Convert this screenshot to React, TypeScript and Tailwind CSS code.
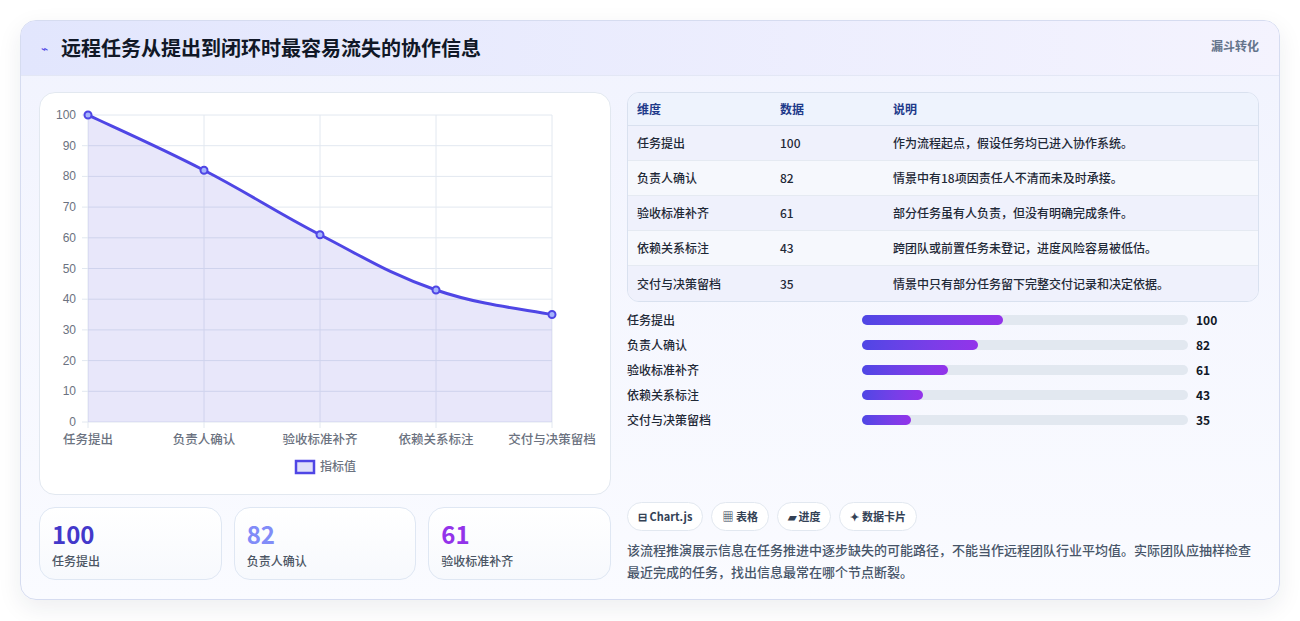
import React from "react";

const rows = [
  ["任务提出", 100, "作为流程起点，假设任务均已进入协作系统。"],
  ["负责人确认", 82, "情景中有18项因责任人不清而未及时承接。"],
  ["验收标准补齐", 61, "部分任务虽有人负责，但没有明确完成条件。"],
  ["依赖关系标注", 43, "跨团队或前置任务未登记，进度风险容易被低估。"],
  ["交付与决策留档", 35, "情景中只有部分任务留下完整交付记录和决定依据。"],
] as const;

const font = { fontFamily: '"Noto Sans CJK SC", "Noto Sans", sans-serif' };

function Chart() {
  const x0 = 48, x1 = 512, y0 = 22, y1 = 329;
  const px = (i: number) => x0 + (i * (x1 - x0)) / 4;
  const py = (v: number) => y1 - (v / 100) * (y1 - y0);
  const pts = rows.map((r, i) => [px(i), py(r[1])] as [number, number]);
  let d = `M${pts[0][0]},${pts[0][1]}`;
  for (let i = 0; i < pts.length - 1; i++) {
    const p0 = pts[Math.max(i - 1, 0)], p1 = pts[i], p2 = pts[i + 1], p3 = pts[Math.min(i + 2, pts.length - 1)];
    const t = 0.2;
    const c1x = p1[0] + (p2[0] - p0[0]) * t, c1y = p1[1] + (p2[1] - p0[1]) * t;
    const c2x = p2[0] - (p3[0] - p1[0]) * t, c2y = p2[1] - (p3[1] - p1[1]) * t;
    d += ` C${c1x},${c1y} ${c2x},${c2y} ${p2[0]},${p2[1]}`;
  }
  const area = `${d} L${x1},${y1} L${x0},${y1} Z`;
  return (
    <svg width="572" height="401" viewBox="0 0 572 401" style={font}>
      {[0, 10, 20, 30, 40, 50, 60, 70, 80, 90, 100].map((v) => (
        <g key={v}>
          <line x1={x0 - 6} x2={x1} y1={py(v)} y2={py(v)} stroke="#e2e8f0" />
          <text x={36} y={py(v) + 4} textAnchor="end" fontSize="12" fill="#6b7280" fontFamily="Liberation Sans, sans-serif">{v}</text>
        </g>
      ))}
      {rows.map((r, i) => (
        <g key={i}>
          <line x1={px(i)} x2={px(i)} y1={y0} y2={y1 + 6} stroke="#e2e8f0" />
          <text x={px(i)} y={351} textAnchor="middle" fontSize="12.5" fontWeight="500" fill="#6b7280">{r[0]}</text>
        </g>
      ))}
      <path d={area} fill="rgba(99,91,221,0.15)" />
      <path d={d} fill="none" stroke="#4f46e5" strokeWidth="3" />
      {pts.map((p, i) => (
        <circle key={i} cx={p[0]} cy={p[1]} r="3.5" fill="#a5b4fc" stroke="#4f46e5" strokeWidth="2" />
      ))}
      <rect x={256} y={368} width={18} height={12} fill="#e0e0fa" stroke="#4f46e5" strokeWidth="2.5" />
      <text x={280} y={378} fontSize="12" fontWeight="500" fill="#6b7280">指标值</text>
    </svg>
  );
}

export default function App() {
  return (
    <div className="min-h-[621px] bg-white pt-5 px-5" style={font}>
      <div className="w-[1260px] h-[580px] rounded-2xl border border-[#d6dcf0] bg-gradient-to-b from-[#f1f3fe] to-[#fafbff] shadow-[0_8px_24px_rgba(30,41,59,0.08)] overflow-hidden">
        <div className="h-[55px] flex items-center justify-between px-5 bg-gradient-to-r from-[#e2e6fd] to-[#f4f3fe] border-b border-[#e3e7f5]">
          <div className="flex items-center gap-2">
            <span className="text-[#4f46e5] text-[12px] w-3">⌁</span>
            <h1 className="text-[20px] font-bold text-[#111827]">远程任务从提出到闭环时最容易流失的协作信息</h1>
          </div>
          <span className="text-[12px] font-bold text-[#64748b] -mt-1">漏斗转化</span>
        </div>
        <div className="flex gap-4 px-5 pt-[16px] -ml-[2px]">
          <div className="w-[572px] flex flex-col gap-3">
            <div className="h-[403px] rounded-2xl border border-[#e2e8f0] bg-white">
              <Chart />
            </div>
            <div className="grid grid-cols-3 gap-3">
              {[
                ["100", "任务提出", "text-[#4338ca]"],
                ["82", "负责人确认", "text-[#818cf8]"],
                ["61", "验收标准补齐", "text-[#9333ea]"],
              ].map(([v, l, c]) => (
                <div key={l} className="h-[73px] rounded-2xl border border-[#dfe7f3] bg-gradient-to-b from-white to-[#f7f9fd] px-3 pt-3">
                  <div className={`text-[24px] leading-[28px] font-bold ${c}`}>{v}</div>
                  <div className="text-[12px] font-medium text-[#4b5563] mt-[4px]">{l}</div>
                </div>
              ))}
            </div>
          </div>
          <div className="w-[632px] flex flex-col">
            <div className="rounded-xl border border-[#d9e1ef] overflow-hidden text-[12px] font-medium">
              <div className="flex h-[33px] items-center bg-[#eef3fd] font-bold text-[#1e3a8a] border-b border-[#d9e1ef]">
                <div className="w-[152px] pl-[9px]">维度</div>
                <div className="w-[113px]">数据</div>
                <div>说明</div>
              </div>
              {rows.map((r, i) => (
                <div key={i} className={`flex h-[35px] items-center text-[#1f2937] ${i < 4 ? "border-b border-[#e5eaf2]" : ""} ${i % 2 === 0 ? "bg-[#eff1fc]" : "bg-[#f6f8fd]"}`}>
                  <div className="w-[152px] pl-[9px]">{r[0]}</div>
                  <div className="w-[113px]">{r[1]}</div>
                  <div>{r[2]}</div>
                </div>
              ))}
            </div>
            <div className="flex flex-col gap-[7px] mt-[9px] text-[12px] font-medium">
              {rows.map((r, i) => (
                <div key={i} className="flex items-center h-[18px]">
                  <div className="w-[235px] text-[#1f2937]">{r[0]}</div>
                  <div className="w-[326px] h-[10px] rounded-full bg-[#e2e8f0]">
                    <div className="h-full rounded-full bg-gradient-to-r from-[#4f46e5] to-[#9333ea]" style={{ width: `${r[1] * 1.41}px` }} />
                  </div>
                  <div className="ml-2 font-bold text-[#111827]">{r[1]}</div>
                </div>
              ))}
            </div>
            <div className="flex gap-2 mt-[73px] text-[11px] font-bold text-[#334155]">
              {["⊟ Chart.js", "▦ 表格", "▰ 进度", "✦ 数据卡片"].map((t) => (
                <span key={t} className="h-[29px] flex items-center px-[10px] rounded-full border border-[#e2e8f0] bg-white">{t}</span>
              ))}
            </div>
            <p className="mt-[8px] text-[13px] font-medium leading-[22px] text-[#475569]">
              该流程推演展示信息在任务推进中逐步缺失的可能路径，不能当作远程团队行业平均值。实际团队应抽样检查最近完成的任务，找出信息最常在哪个节点断裂。
            </p>
          </div>
        </div>
      </div>
    </div>
  );
}
